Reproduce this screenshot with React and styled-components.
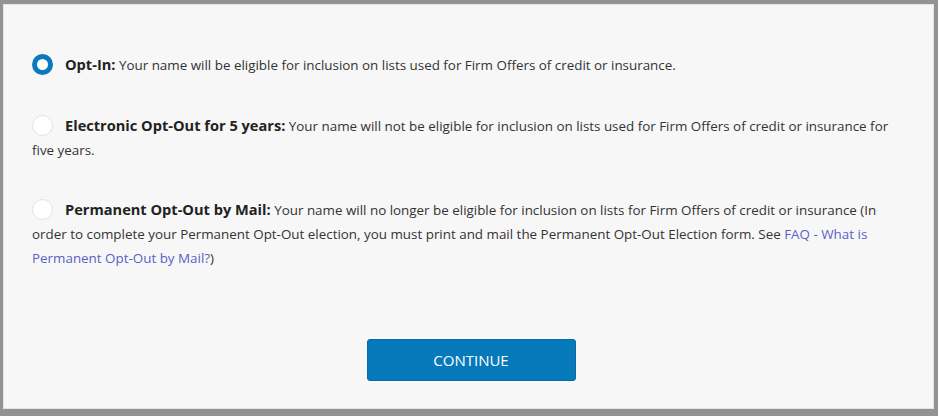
import React, { useState } from 'react'
import styled, { createGlobalStyle } from 'styled-components'

const options = [
    {
        id: 'optin',
        label: 'Opt-In:',
        text: 'Your name will be eligible for inclusion on lists used for Firm Offers of credit or insurance.',
    },
    {
        id: 'electronic',
        label: 'Electronic Opt-Out for 5 years:',
        text: 'Your name will not be eligible for inclusion on lists used for Firm Offers of credit or insurance for five years.',
    },
    {
        id: 'permanent',
        label: 'Permanent Opt-Out by Mail:',
        text: 'Your name will no longer be eligible for inclusion on lists for Firm Offers of credit or insurance (In order to complete your Permanent Opt-Out election, you must print and mail the Permanent Opt-Out Election form. See ',
        link: 'FAQ - What is Permanent Opt-Out by Mail?',
        after: ')',
    },
]

export default function App() {
    const [choice, setChoice] = useState('optin')

    return (
        <>
            <GlobalStyle />
            <Frame>
                <Panel>
                    <Options>
                        {options.map(o => (
                            <Option key={o.id} onClick={() => setChoice(o.id)}>
                                <Radio checked={choice === o.id} />
                                <Label>{o.label}</Label>{' '}
                                {o.text}
                                {o.link && <FaqLink href="#">{o.link}</FaqLink>}
                                {o.after}
                            </Option>
                        ))}
                    </Options>
                    <Actions>
                        <ContinueButton>CONTINUE</ContinueButton>
                    </Actions>
                </Panel>
            </Frame>
        </>
    )
}

// STYLED COMPONENTS /////////////////////

const GlobalStyle = createGlobalStyle`
body {
    margin: 0;
    background: #939393;
    font-family: "Open Sans", "Liberation Sans", sans-serif;
}
`

const Frame = styled.div`
width: 938px;
height: 416px;
box-sizing: border-box;
padding: 4px 4px 7px 3px;
background: #939393;
`

const Panel = styled.div`
height: 100%;
box-sizing: border-box;
background: #f7f7f7;
border: 1px solid #e4e4e4;
padding: 48px 33px 0 28px;
display: flex;
flex-direction: column;
`

const Options = styled.div`
display: flex;
flex-direction: column;
gap: 36.5px;
`

const Option = styled.p`
margin: 0;
font-size: 13.4px;
line-height: 24px;
color: #333;
cursor: pointer;
`

const Radio = styled.span`
display: inline-block;
vertical-align: -5px;
width: 21px;
height: 21px;
box-sizing: border-box;
border-radius: 50%;
margin-right: 12px;
background: #fff;
border: ${p => (p.checked ? '5px solid #0a79bd' : '1px solid #e2e2e2')};
`

const Label = styled.b`
font-size: 14.6px;
line-height: 1;
font-weight: 700;
color: #222;
`

const FaqLink = styled.a`
color: #5b5fc7;
text-decoration: none;
`

const Actions = styled.div`
display: flex;
justify-content: center;
margin-top: 69px;
padding-left: 10px;
`

const ContinueButton = styled.button`
width: 209px;
height: 42px;
border: 1px solid #0a6aa8;
border-radius: 3px;
background: #0679ba;
color: #fff;
font-family: "Open Sans", "Liberation Sans", sans-serif;
font-size: 15px;
cursor: pointer;
`
